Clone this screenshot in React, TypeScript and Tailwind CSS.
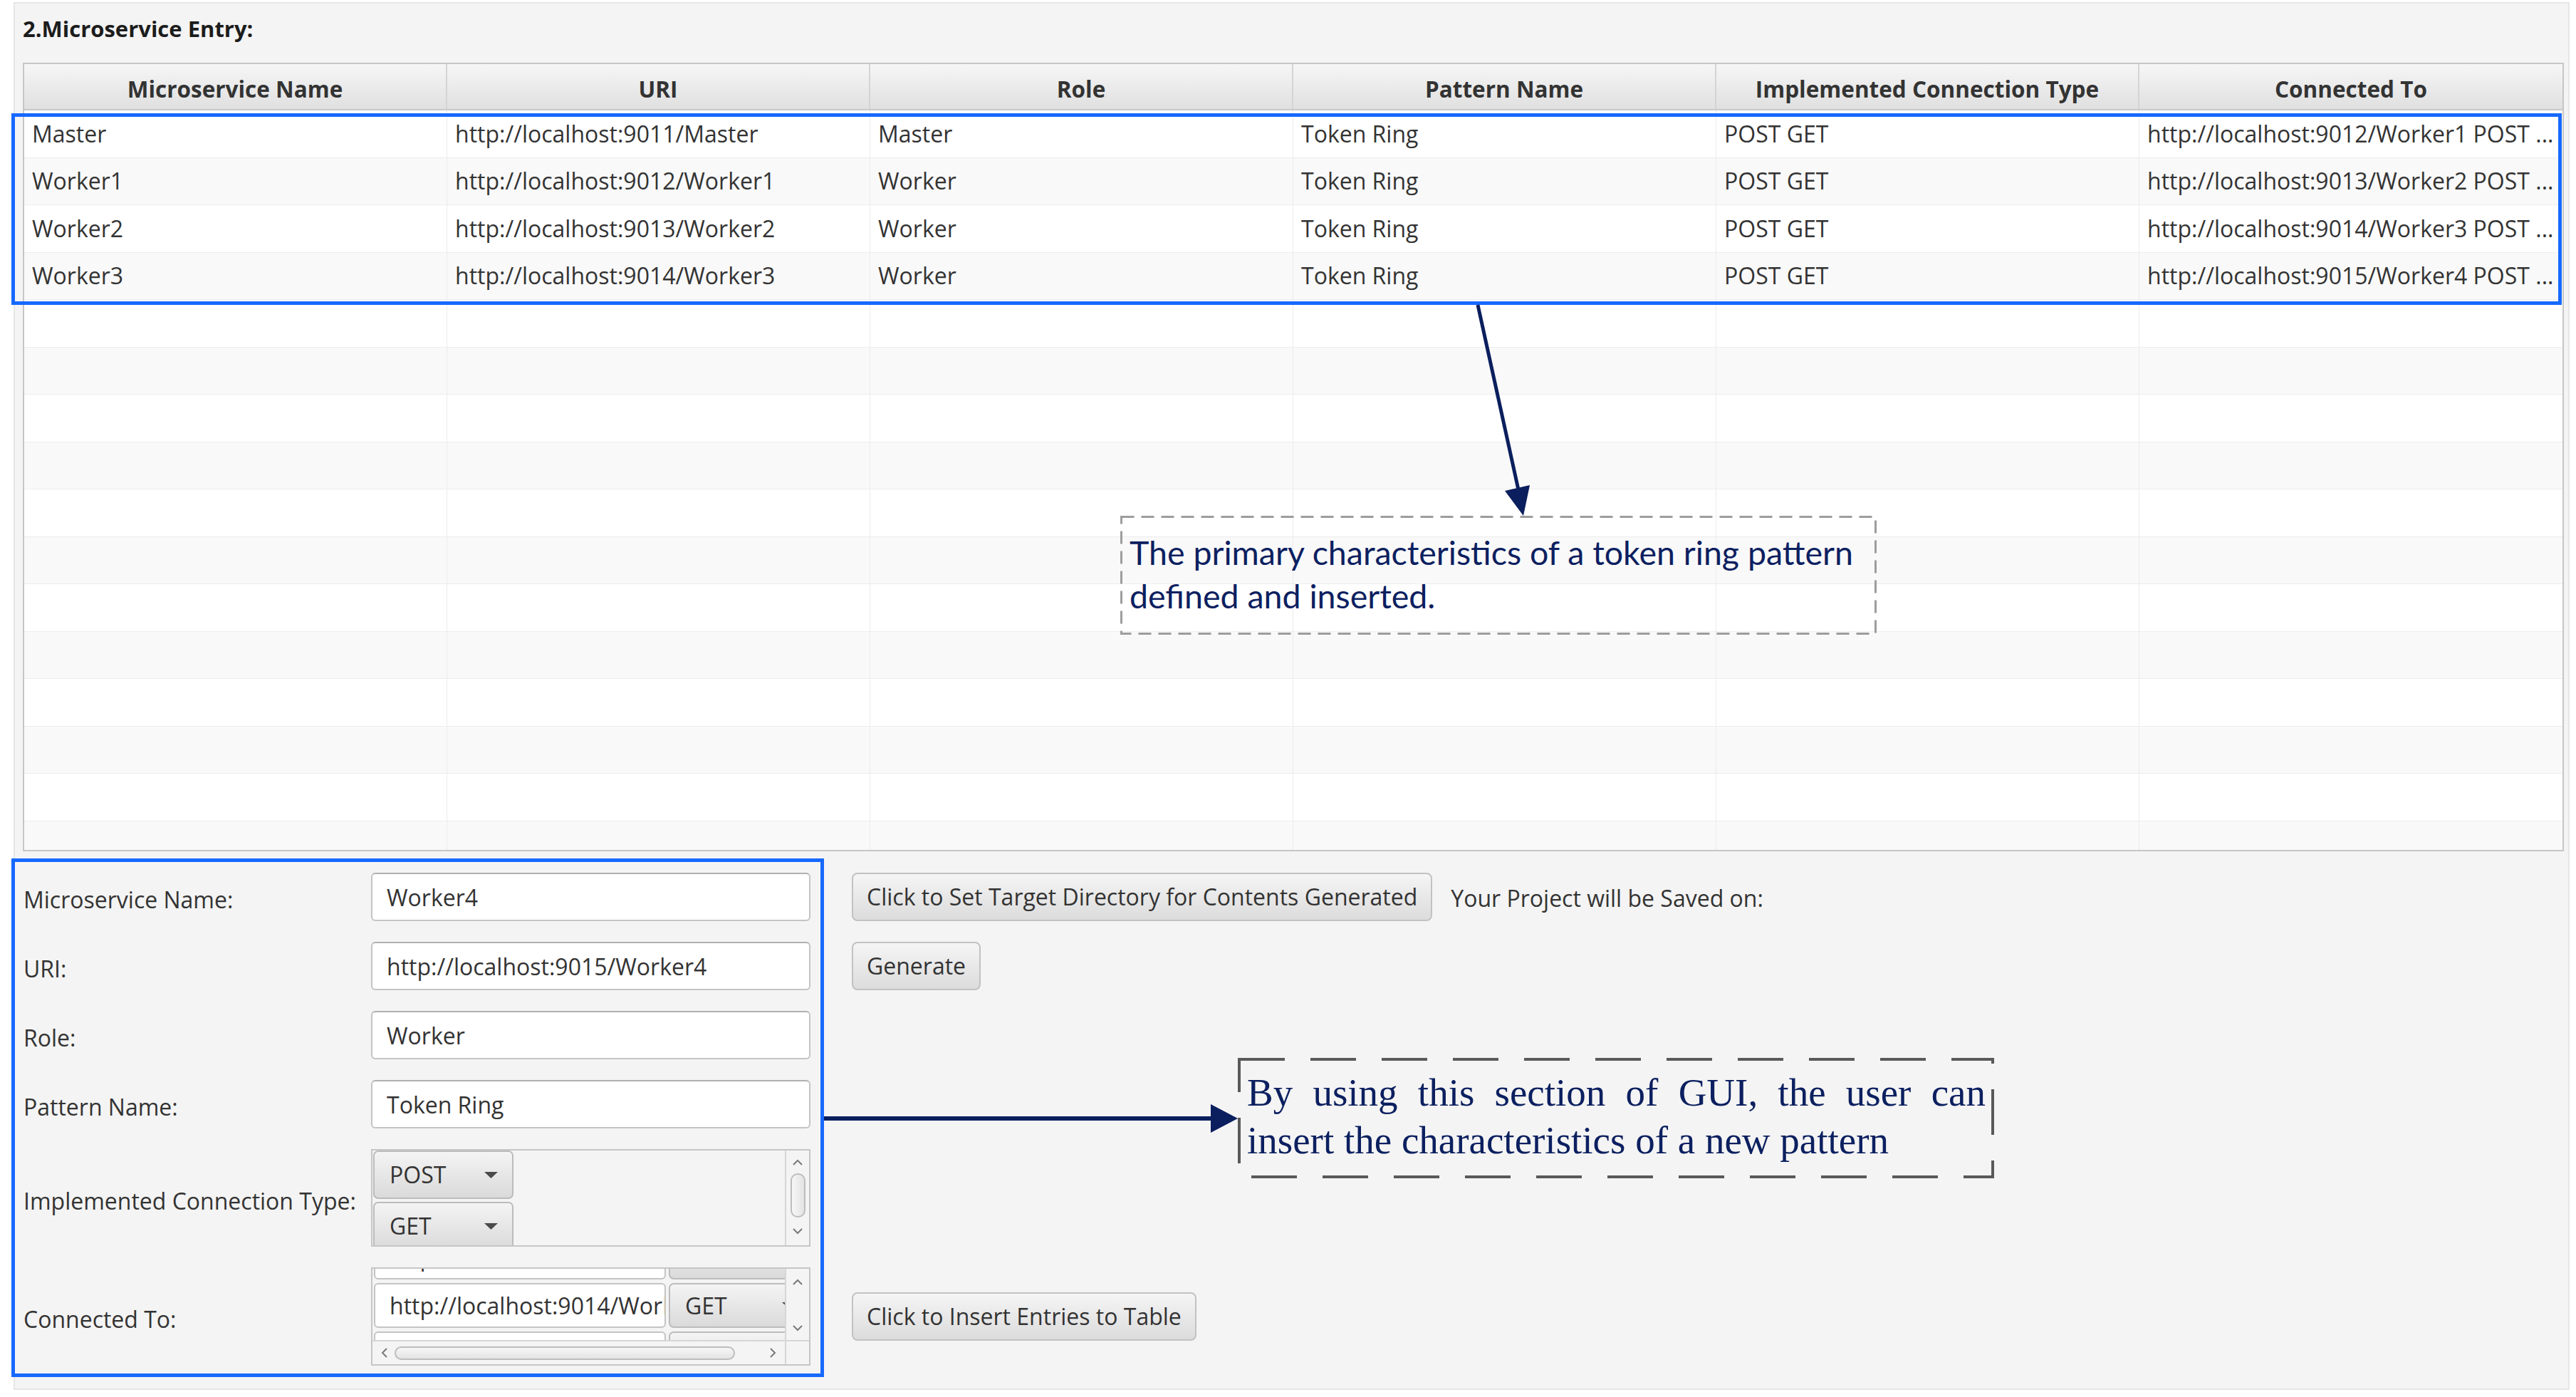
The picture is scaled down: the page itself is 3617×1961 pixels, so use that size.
import React from 'react';

const headers = ['Microservice Name', 'URI', 'Role', 'Pattern Name', 'Implemented Connection Type', 'Connected To'];

const entries: string[][] = [
  ['Master', 'http://localhost:9011/Master', 'Master', 'Token Ring', 'POST GET', 'http://localhost:9012/Worker1 POST ...'],
  ['Worker1', 'http://localhost:9012/Worker1', 'Worker', 'Token Ring', 'POST GET', 'http://localhost:9013/Worker2 POST ...'],
  ['Worker2', 'http://localhost:9013/Worker2', 'Worker', 'Token Ring', 'POST GET', 'http://localhost:9014/Worker3 POST ...'],
  ['Worker3', 'http://localhost:9014/Worker3', 'Worker', 'Token Ring', 'POST GET', 'http://localhost:9015/Worker4 POST ...'],
];

// table keeps showing empty striped rows below the data
const bodyRows = [...entries, ...Array.from({ length: 12 }, () => ['', '', '', '', '', ''])];

const NAVY = '#0b1f5e';

function Chevron({ dir }: { dir: 'up' | 'down' | 'left' | 'right' }) {
  const d = {
    up: 'M1 8 L7 2 L13 8',
    down: 'M1 2 L7 8 L13 2',
    left: 'M8 1 L2 7 L8 13',
    right: 'M2 1 L8 7 L2 13',
  }[dir];
  const horiz = dir === 'up' || dir === 'down';
  return (
    <svg width={horiz ? 14 : 10} height={horiz ? 10 : 14} viewBox={horiz ? '0 0 14 10' : '0 0 10 14'}>
      <path d={d} fill="none" stroke="#7a7a7a" strokeWidth="2" />
    </svg>
  );
}

function Combo({ label, className }: { label: string; className: string }) {
  return (
    <div
      className={`flex shrink-0 items-center justify-between rounded-[7px] border-2 border-[#bcbcbc] bg-linear-to-b from-[#f4f4f4] to-[#dadada] pl-[21px] pr-[20px] text-[32px] text-[#333] ${className}`}
    >
      <span>{label}</span>
      <svg width="19" height="9" viewBox="0 0 19 9">
        <path d="M0 0H19L9.5 9Z" fill="#4a4a4a" />
      </svg>
    </div>
  );
}

function TextField({ value }: { value: string }) {
  return (
    <div className="flex h-[68px] items-center rounded-[6px] border-2 border-[#c4c4c4] border-t-[#b0b0b0] bg-white pl-[20px] pt-[2px] text-[32px] text-[#333]">
      {value}
    </div>
  );
}

function Button({ children }: { children: React.ReactNode }) {
  return (
    <div className="flex h-[68px] items-center rounded-[8px] border-2 border-[#c2c2c2] bg-linear-to-b from-[#f5f5f5] to-[#dcdcdc] px-[19px] text-[32px] text-[#333] whitespace-nowrap">
      {children}
    </div>
  );
}

function Label({ children }: { children: React.ReactNode }) {
  return <div className="flex items-center pl-[1px] pt-[8px] text-[32px] text-[#333] whitespace-nowrap">{children}</div>;
}

function ConnectionTypeList() {
  return (
    <div className="flex h-[137px] overflow-hidden border-2 border-[#c6c6c6] bg-[#f4f4f4]">
      <div className="flex flex-1 flex-col gap-[4px] overflow-hidden pl-[1px]">
        <Combo label="POST" className="h-[68px] w-[197px]" />
        <Combo label="GET" className="h-[68px] w-[197px]" />
      </div>
      <div className="flex w-[34px] flex-col items-center border-l-2 border-[#d6d6d6] pt-[12px]">
        <Chevron dir="up" />
        <div className="mt-[10px] h-[62px] w-[21px] rounded-[10px] border-2 border-[#bdbdbd] bg-linear-to-r from-[#f7f7f7] to-[#e3e3e3]" />
        <div className="mt-[14px]">
          <Chevron dir="down" />
        </div>
      </div>
    </div>
  );
}

function ConnectedPane() {
  const rowsIn = [
    ['http://localhost:9013/Worker2', 'POST'],
    ['http://localhost:9014/Worker3', 'GET'],
    ['http://localhost:9015/Worker4', 'POST'],
  ];
  return (
    <div className="flex h-[138px] flex-col overflow-hidden border-2 border-[#c6c6c6] bg-[#f4f4f4]">
      <div className="flex h-[100px]">
        <div className="w-[579px] overflow-hidden">
          <div className="-mt-[48px] flex flex-col gap-[5px] pl-[2px]">
            {rowsIn.map(([url, m], i) => (
              <div key={i} className="flex h-[63px] gap-[4px]">
                <div className="flex w-[410px] shrink-0 items-center overflow-hidden whitespace-nowrap rounded-[6px] border-2 border-[#c4c4c4] bg-white pl-[20px] text-[32px] text-[#333]">
                  {url}
                </div>
                <Combo label={m} className="h-[63px] w-[200px]" />
              </div>
            ))}
          </div>
        </div>
        <div className="flex flex-1 flex-col items-center justify-between border-l-2 border-[#d6d6d6] pt-[14px] pb-[12px]">
          <Chevron dir="up" />
          <Chevron dir="down" />
        </div>
      </div>
      <div className="flex h-[34px] border-t-2 border-[#d6d6d6]">
        <div className="flex w-[579px] items-center pl-[12px] pr-[12px]">
          <Chevron dir="left" />
          <div className="ml-[9px] h-[19px] w-[478px] rounded-[10px] border-2 border-[#bdbdbd] bg-linear-to-b from-[#f7f7f7] to-[#e3e3e3]" />
          <div className="ml-auto">
            <Chevron dir="right" />
          </div>
        </div>
        <div className="flex-1 border-l-2 border-[#d6d6d6]" />
      </div>
    </div>
  );
}

export default function App() {
  return (
    <div className="relative h-[1961px] w-[3617px] overflow-hidden bg-white font-['Open_Sans',sans-serif]">
      {/* app window */}
      <div className="ml-[19px] mt-[3px] h-[1948px] w-[3589px] border-2 border-[#e6e6e6] bg-[#f4f4f4] pl-[11px] pt-[14px]">
        <div className="text-[31px] leading-[42px] font-bold text-[#1c1c1c]">2.Microservice Entry:</div>

        {/* table */}
        <div className="mt-[27px] w-[3568px] border-2 border-[#c6c6c6] bg-white">
          <div className="grid h-[65px] grid-cols-6 border-b-2 border-[#c9c9c9] bg-linear-to-b from-[#f6f6f6] to-[#e0e0e0]">
            {headers.map((h) => (
              <div
                key={h}
                className="flex items-center justify-center border-r-2 border-[#d4d4d4] pt-[6px] text-[31.5px] font-bold text-[#333] last:border-r-0"
              >
                {h}
              </div>
            ))}
          </div>
          <div className="h-[1038px] overflow-hidden">
            {bodyRows.map((r, i) => (
              <div
                key={i}
                className={`grid h-[66.5px] grid-cols-6 border-b border-[#ededed] ${i % 2 ? 'bg-[#f9f9f9]' : 'bg-white'}`}
              >
                {r.map((c, j) => (
                  <div
                    key={j}
                    className="flex items-center overflow-hidden whitespace-nowrap border-r border-[#ebebeb] pl-[11px] text-[32px] text-[#333] last:border-r-0"
                  >
                    {c}
                  </div>
                ))}
              </div>
            ))}
          </div>
        </div>

        {/* entry form */}
        <div className="mt-[30px] grid grid-cols-[489px_617px_1fr] grid-rows-[68px_68px_68px_68px_137px_138px] gap-y-[29px]">
          <Label>Microservice Name:</Label>
          <TextField value="Worker4" />
          <div className="flex items-center pl-[58px]">
            <Button>Click to Set Target Directory for Contents Generated</Button>
            <span className="ml-[26px] pt-[4px] text-[32px] text-[#333] whitespace-nowrap">Your Project will be Saved on:</span>
          </div>

          <Label>URI:</Label>
          <TextField value="http://localhost:9015/Worker4" />
          <div className="flex items-center pl-[58px]">
            <Button>Generate</Button>
          </div>

          <Label>Role:</Label>
          <TextField value="Worker" />
          <div />

          <Label>Pattern Name:</Label>
          <TextField value="Token Ring" />
          <div />

          <Label>Implemented Connection Type:</Label>
          <ConnectionTypeList />
          <div />

          <Label>Connected To:</Label>
          <ConnectedPane />
          <div className="flex items-center pl-[58px]">
            <Button>Click to Insert Entries to Table</Button>
          </div>
        </div>
      </div>

      {/* annotation: highlight frames */}
      <div className="absolute left-[16px] top-[159px] h-[269px] w-[3581px] border-[5px] border-[#1769ff]" />
      <div className="absolute left-[16px] top-[1205px] h-[728px] w-[1141px] border-[5px] border-[#1769ff]" />

      {/* annotation: arrows */}
      <svg className="pointer-events-none absolute left-0 top-0" width="3617" height="1961">
        <line x1="2075" y1="428" x2="2133" y2="692" stroke={NAVY} strokeWidth="5" />
        <polygon points="2139,724 2113,689 2148,681" fill={NAVY} />
        <line x1="1157" y1="1570" x2="1706" y2="1570" stroke={NAVY} strokeWidth="6" />
        <polygon points="1738,1570 1700,1550 1700,1590" fill={NAVY} />
      </svg>

      {/* annotation: callout over table */}
      <div className="absolute left-[1573px] top-[724px] h-[167px] w-[1062px]">
        <svg className="absolute left-0 top-0" width="1062" height="167">
          <rect x="1.5" y="1.5" width="1059" height="164" fill="none" stroke="#9d9d9d" strokeWidth="3" strokeDasharray="18 10" />
        </svg>
        <div className="absolute left-[13px] top-[21px] font-['Lato',sans-serif] text-[46.5px] leading-[61px] text-[#0c2060] whitespace-nowrap">
          <div>The primary characteristics of a token ring pattern</div>
          <div>defined and inserted.</div>
        </div>
      </div>

      {/* annotation: callout for form */}
      <div className="absolute left-[1738px] top-[1485px] h-[169px] w-[1062px]">
        <svg className="absolute left-0 top-0" width="1062" height="169">
          <rect x="2" y="2" width="1058" height="165" fill="none" stroke="#595959" strokeWidth="4" strokeDasharray="64 36" />
        </svg>
        <div className="absolute left-[13px] top-[15px] w-[1037px] font-['Liberation_Serif',serif] text-[55px] leading-[67px] text-[#0c2060]">
          <div className="[text-align-last:justify] text-justify whitespace-nowrap">By using this section of GUI, the user can</div>
          <div>insert the characteristics of a new pattern</div>
        </div>
      </div>
    </div>
  );
}
